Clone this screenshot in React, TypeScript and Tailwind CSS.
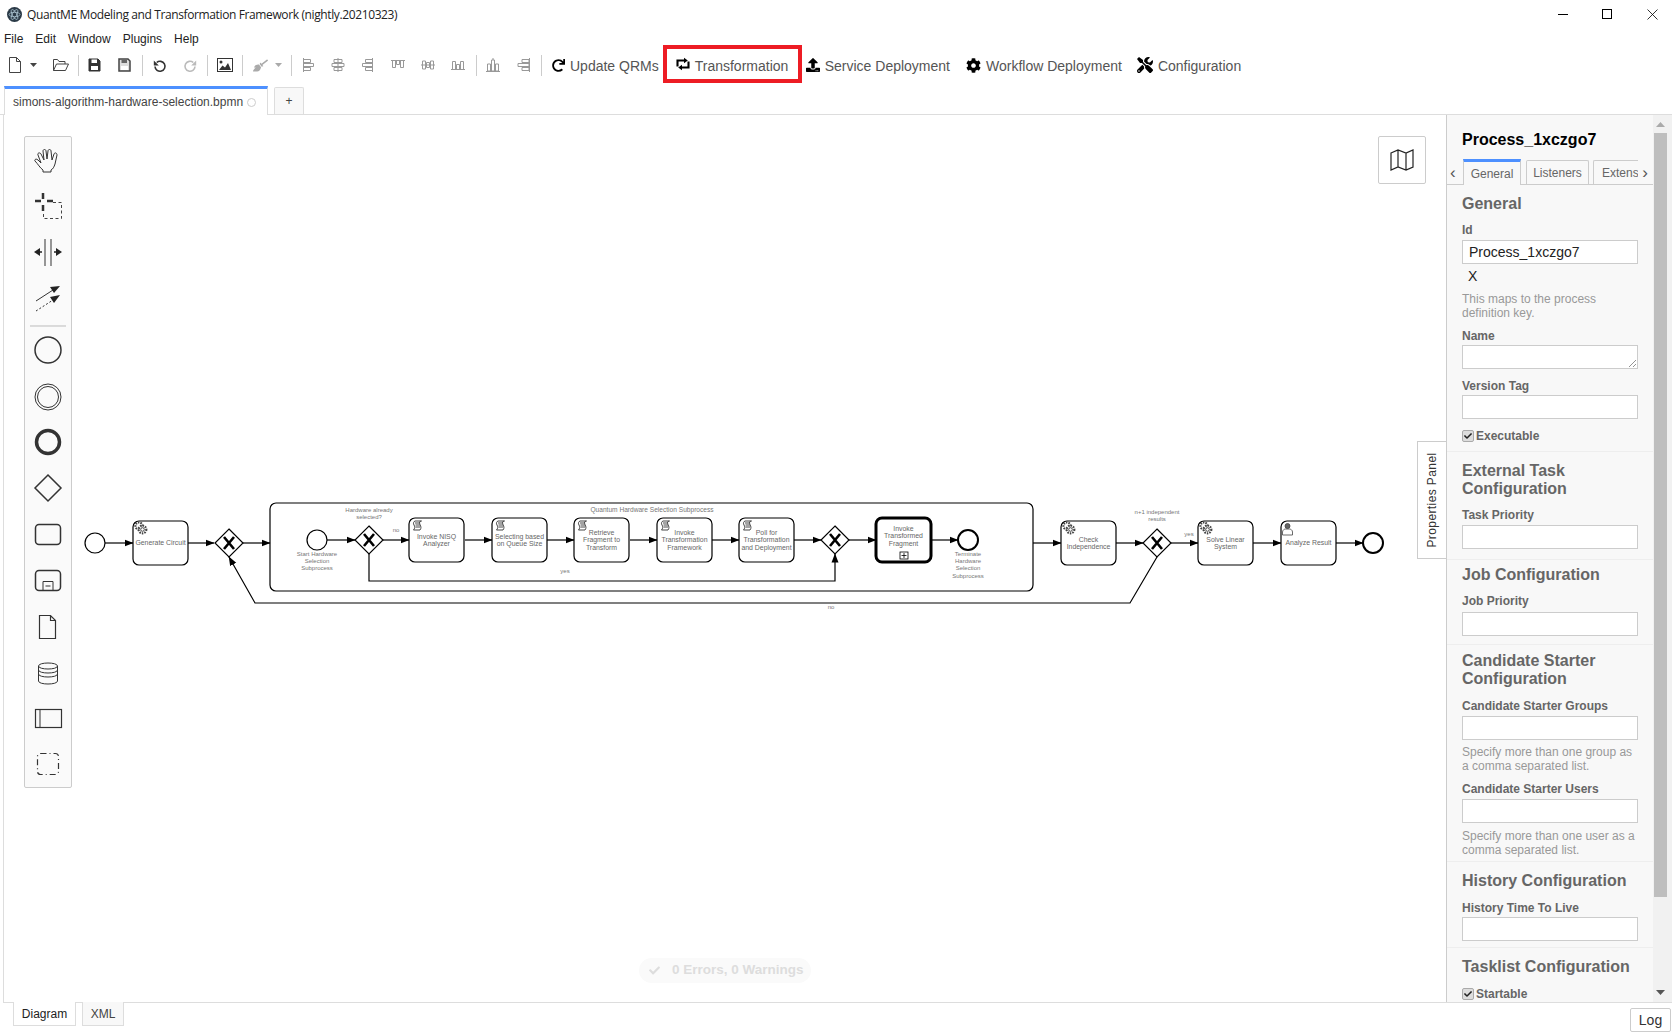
import React from 'react';
import { FaBroom, FaCheck, FaCog, FaRedo, FaTools, FaUpload } from 'react-icons/fa';

const ui = "font-['Liberation_Sans',Arial,sans-serif]";

// toolbar icons, drawn like the diagram-js toolbar set
const stroke = { fill: 'none', stroke: 'currentColor', strokeWidth: 1 };

const NewIcon = () => (
  <svg width="16" height="18" viewBox="0 0 16 18"><path d="M2.500 1.500h7l4 4v11h-11zM9.500 1.500v4h4" {...stroke} /></svg>
);
const OpenIcon = () => (
  <svg width="18" height="14" viewBox="0 0 18 14"><path d="M1.500 12.500v-11h4l1.500 2h6v2.500M1.500 12.500l3-6.500h12l-3 6.500z" {...stroke} /></svg>
);
const SaveIcon = ({ outline }: { outline?: boolean }) => (
  <svg width="13" height="14" viewBox="0 0 13 14">
    <path d="M1 1h9l2 2v10H1z" fill={outline ? '#ddd' : 'currentColor'} stroke="currentColor" strokeWidth={outline ? 1.500 : 1} />
    <rect x="3.500" y="1.500" width="5.500" height="3.500" fill={outline ? '#666' : '#fff'} />
    <rect x="3" y="8" width="7" height="4" fill="#fff" />
  </svg>
);
const UndoIcon = ({ flip }: { flip?: boolean }) => (
  <svg width="14" height="15" viewBox="0 0 14 15" className={flip ? '-scale-x-100' : ''}>
    <path d="M3.700 4.500A5 5 0 1 1 2 8.500" fill="none" stroke="currentColor" strokeWidth="1.600" />
    <path d="M0.800 2.500v5h5z" fill="currentColor" />
  </svg>
);
const ImageIcon = () => (
  <svg width="16" height="14" viewBox="0 0 16 14">
    <rect x="0.500" y="0.500" width="15" height="13" fill="#fff" stroke="currentColor" />
    <path d="M2 12l3.500-4.500 2.500 2 3-4.500 3 7z" fill="currentColor" />
    <circle cx="4" cy="4" r="1.500" fill="currentColor" />
  </svg>
);
const RepeatIcon = () => (
  <svg width="16" height="14" viewBox="0 0 16 14">
    <path d="M2.500 9.500V3.500h7M13.500 4.500v6h-7" fill="none" stroke="currentColor" strokeWidth="2.100" />
    <path d="M9 0.800l3.800 2.700L9 6.200zM7 7.800l-3.800 2.700L7 13.200z" fill="currentColor" />
  </svg>
);

// align / distribute glyphs, all thin outlines
const AlignIcon = ({ d }: { d: string }) => (
  <svg width="16" height="16" viewBox="0 0 16 16"><path d={d} {...stroke} /></svg>
);

const Caret = ({ light }: { light?: boolean }) => (
  <svg width="7" height="4" viewBox="0 0 7 4" className={light ? 'text-[#aaa]' : 'text-[#444]'}><path d="M0 0h7L3.500 4z" fill="currentColor" /></svg>
);
const Sep = () => <div className="h-[21px] w-px bg-[#ccc]" />;

const ToolBtn = ({ icon, label, className = '' }: { icon: React.ReactNode; label: string; className?: string }) => (
  <div className={`flex items-center gap-[5px] text-[14px] text-[#555] ${className}`}>
    <span className="text-black">{icon}</span>
    <span className="pt-[2px]">{label}</span>
  </div>
);

function Toolbar() {
  return (
    <div className="flex h-[32px] items-center pl-[4px]">
      <div className="flex w-[22px] justify-center text-[#444]"><NewIcon /></div>
      <div className="ml-[4px] w-[10px]"><Caret /></div>
      <div className="ml-[12px] text-[#444]"><OpenIcon /></div>
      <div className="ml-[8px]"><Sep /></div>
      <div className="ml-[9px] text-[#333]"><SaveIcon /></div>
      <div className="ml-[17px] text-[#444]"><SaveIcon outline /></div>
      <div className="ml-[11px]"><Sep /></div>
      <div className="ml-[10px] text-[#333]"><UndoIcon /></div>
      <div className="ml-[16px] text-[#bbb]"><UndoIcon flip /></div>
      <div className="ml-[10px]"><Sep /></div>
      <div className="ml-[9px] text-[#333]"><ImageIcon /></div>
      <div className="ml-[9px]"><Sep /></div>
      <div className="ml-[10px] text-[#aaa]"><FaBroom size={15} /></div>
      <div className="ml-[7px]"><Caret light /></div>
      <div className="ml-[9px]"><Sep /></div>
      <div className="ml-[8px] flex items-center gap-[14px] text-[#999]">
        <AlignIcon d="M3.500 1v14M3.500 2.500h7v3h-7M3.500 6.500h10v3h-10M3.500 10.500h7v3h-7" />
        <AlignIcon d="M8 1v14M4 2.500h8v3H4zM2 6.500h12v3H2zM4 10.500h8v3H4z" />
        <AlignIcon d="M12.500 1v14M12.500 2.500h-7v3h7M12.500 6.500h-10v3h10M12.500 10.500h-7v3h7" />
        <AlignIcon d="M1 3.500h14M2.500 3.500v7h3v-7M6.500 3.500v4h3v-4M10.500 3.500v7h3v-7" />
        <AlignIcon d="M1 8h14M2.500 4h3v8h-3zM6.500 5.500h3v5h-3zM10.500 4h3v8h-3z" />
        <AlignIcon d="M1 12.500h14M2.500 12.500v-8h3v8M6.500 12.500v-5h3v5M10.500 12.500v-8h3v8" />
      </div>
      <div className="ml-[10px]"><Sep /></div>
      <div className="ml-[8px] flex items-center gap-[14px] text-[#999]">
        <AlignIcon d="M1 14.500h14M2.500 7h3v7h-3zM6.500 3h3v11h-3zM10.500 7h3v7h-3zM8 3V1" />
        <AlignIcon d="M14.500 1v14M7 2.500h7v3H7zM3 6.500h11v3H3zM7 10.500h7v3H7z" />
      </div>
      <div className="ml-[10px]"><Sep /></div>
      <ToolBtn className="ml-[10px]" icon={<FaRedo size={13} />} label="Update QRMs" />
      <div className="-mt-[2px] ml-[4px] flex h-[38px] w-[139px] items-center gap-[4px] border-4 border-[#ed1c24] pl-[8px] text-[14px] text-[#555]">
        <span className="text-black"><RepeatIcon /></span>
        <span className="pt-[4px]">Transformation</span>
      </div>
      <ToolBtn className="ml-[4px]" icon={<FaUpload size={14} />} label="Service Deployment" />
      <ToolBtn className="ml-[16px]" icon={<FaCog size={15} />} label="Workflow Deployment" />
      <ToolBtn className="ml-[15px]" icon={<FaTools size={16} />} label="Configuration" />
    </div>
  );
}

function Palette() {
  const s = { fill: 'none', stroke: '#333', strokeWidth: 1.500 };
  return (
    <div className="absolute left-[20px] top-[21px] h-[652px] w-[48px] rounded-[2px] border border-[#ccc] bg-[#fafafa]">
      <svg width="46" height="650" viewBox="25 137 46 650">
        {/* hand */}
        <path transform="translate(1 2)" d="M42 168c-3-2-5-6-8-9-1-1 1-3 3-1l3 3-3-8c-1-2 2-3 3-1l3 6-1-9c0-2 3-2 3 0l1 8 1-8c0-2 3-2 3 0l1 9 2-6c1-2 3-1 3 1l-2 9c-1 3-2 5-4 6v2h-8z" fill="none" stroke="#333" strokeWidth="1" />
        {/* lasso */}
        <path d="M43 193v6M43 205v6M35 201h6M47 201h6" stroke="#333" strokeWidth="2.500" fill="none" />
        <path d="M53 202.500h8.500v16H43.500v-7" stroke="#444" fill="none" strokeDasharray="3 2.500" />
        {/* space */}
        <path d="M45 239v27M51 239v27" stroke="#333" strokeWidth="1" />
        <path d="M34 252l6-4v8zM62 252l-6-4v8z" fill="#222" />
        <path d="M37 252h5M54 252h5" stroke="#222" strokeWidth="1.500" />
        {/* connect */}
        <path d="M36 301l17-11" stroke="#333" strokeWidth="1" />
        <path d="M60 286l-10 1 4 6z" fill="#222" />
        <path d="M36 311l17-11" stroke="#333" strokeDasharray="2 2" />
        <path d="M60 295l-10 2 4 6z" fill="#222" />
        <path d="M30 326h36" stroke="#bbb" />
        {/* events */}
        <circle cx="48" cy="350" r="13" {...s} />
        <circle cx="48" cy="397" r="13" {...s} strokeWidth={1} />
        <circle cx="48" cy="397" r="10.500" {...s} strokeWidth={1} />
        <circle cx="48" cy="442" r="11.500" fill="none" stroke="#333" strokeWidth="3.500" />
        <path d="M48 475l13 13-13 13-13-13z" {...s} />
        <rect x="35.500" y="524.500" width="25" height="20" rx="3.500" {...s} />
        <rect x="35.500" y="570.500" width="25" height="20" rx="3.500" {...s} />
        <path d="M43 590.500v-9h10v9M45.500 586h5" stroke="#333" fill="none" />
        <path d="M39.500 615.500h11l5 5v18h-16zM50.500 615.500v5h5" fill="none" stroke="#333" strokeWidth="1.200" />
        <path d="M38.500 666v15c0 4 19 4 19 0v-15c0-4-19-4-19 0c0 4 19 4 19 0M38.500 670c0 4 19 4 19 0M38.500 674c0 4 19 4 19 0" fill="none" stroke="#333" strokeWidth="1" />
        <rect x="35.500" y="709.500" width="26" height="18" fill="none" stroke="#333" strokeWidth="1.200" />
        <path d="M40 709.500v18" stroke="#333" />
        <rect x="37.500" y="753.500" width="21" height="21" rx="3" fill="none" stroke="#333" strokeWidth="1.200" strokeDasharray="6 3 1 3" />
      </svg>
    </div>
  );
}

const Gear = ({ x, y }: { x: number; y: number }) => (
  <g fill="none" stroke="#444" strokeWidth="1">
    <circle cx={x} cy={y} r="3.500" strokeDasharray="1.500 1" strokeWidth="2.200" />
    <circle cx={x + 3.500} cy={y + 3.500} r="3.800" strokeDasharray="1.500 1" strokeWidth="2.200" fill="#fff" />
    <circle cx={x + 3.500} cy={y + 3.500} r="1.800" fill="#fff" />
  </g>
);

const Script = ({ x }: { x: number }) => (
  <path
    transform={`translate(${x} 520)`}
    d="M2 0h6.500c-2 0-2.500 1.500-1.500 3.500s1.500 3.500 0 5.500H0.500c1.500-1.500 1.500-3.500 0.500-5s-0.500-3.500 1-4zM2 2h4.500M2.500 4h4.500M2.500 6h4.500"
    fill="none"
    stroke="#333"
    strokeWidth="0.900"
  />
);

const Task = ({ x, y, lines, w = 55, thick, icon }: { x: number; y: number; lines: string[]; w?: number; thick?: boolean; icon?: React.ReactNode }) => {
  const cx = x + w / 2;
  const top = y + 22 - (lines.length - 1) * 3.700 + 2.200 - (thick ? 4 : 0);
  return (
    <g>
      <rect x={x} y={y} width={w} height={44} rx="6" fill="#fff" stroke="#000" strokeWidth={thick ? 3 : 1.200} />
      {icon}
      <text textAnchor="middle" fontSize="6.900" fill="#666">
        {lines.map((l, i) => <tspan key={l} x={cx} y={top + i * 7.500}>{l}</tspan>)}
      </text>
    </g>
  );
};

const Xor = ({ cx, cy }: { cx: number; cy: number }) => (
  <g>
    <path d={`M${cx} ${cy - 14}l14 14-14 14-14-14z`} fill="#fff" stroke="#000" strokeWidth="1.200" />
    <path d={`M${cx - 5} ${cy - 6}l10 12M${cx + 5} ${cy - 6}l-10 12`} stroke="#000" strokeWidth="2.600" />
  </g>
);

const Flow = ({ d }: { d: string }) => (
  <path d={d} fill="none" stroke="#000" strokeWidth="1.200" markerEnd="url(#arrow)" />
);

const Label = ({ x, y, lines, size = 6 }: { x: number; y: number; lines: string[]; size?: number }) => (
  <text textAnchor="middle" fontSize={size} fill="#777">
    {lines.map((l, i) => <tspan key={l} x={x} y={y + i * 7.200}>{l}</tspan>)}
  </text>
);

function Diagram() {
  return (
    <svg className={`absolute left-0 top-0 ${ui}`} width="1442" height="887" viewBox="4 114 1442 887">
      <defs>
        <marker id="arrow" markerWidth="10" markerHeight="8" refX="8.500" refY="4" orient="auto" markerUnits="userSpaceOnUse">
          <path d="M0 0.500L9 4L0 7.500z" fill="#000" />
        </marker>
      </defs>

      <Flow d="M105 542h28" />
      <Flow d="M188 542h26" />
      <Flow d="M243 542h27" />
      <Flow d="M327 539h28" />
      <Flow d="M383 539h26" />
      <Flow d="M465 539h27" />
      <Flow d="M547 539h27" />
      <Flow d="M630 539h27" />
      <Flow d="M712 539h27" />
      <Flow d="M794 539h27" />
      <Flow d="M849 539h27" />
      <Flow d="M932 539h26" />
      <Flow d="M1033 542h28" />
      <Flow d="M1116 542h27" />
      <Flow d="M1171 542h27" />
      <Flow d="M1253 542h28" />
      <Flow d="M1336 542h27" />
      <Flow d="M369 553v27h466v-27" />
      <Flow d="M1157 556l-27 46H255l-26-46" />

      <circle cx="95" cy="542" r="10" fill="#fff" stroke="#000" strokeWidth="1.200" />
      <Task x={133} y={520} lines={['Generate Circuit']} icon={<Gear x={139} y={525} />} />
      <Xor cx={229} cy={542} />

      <rect x="270" y="502" width="763" height="88" rx="6" fill="none" stroke="#000" strokeWidth="1.200" />
      <Label x={652} y={511} size={6.600} lines={['Quantum Hardware Selection Subprocess']} />

      <circle cx="317" cy="539" r="10" fill="#fff" stroke="#000" strokeWidth="1.200" />
      <Label x={317} y={555} lines={['Start Hardware', 'Selection', 'Subprocess']} />
      <Xor cx={369} cy={539} />
      <Label x={369} y={511} lines={['Hardware already', 'selected?']} />
      <Label x={396} y={531} lines={['no']} />

      <Task x={409} y={517} lines={['Invoke NISQ', 'Analyzer']} icon={<Script x={413} />} />
      <Task x={492} y={517} w={55} lines={['Selecting based', 'on Queue Size']} icon={<Script x={496} />} />
      <Task x={574} y={517} lines={['Retrieve', 'Fragment to', 'Transform']} icon={<Script x={578} />} />
      <Task x={657} y={517} lines={['Invoke', 'Transformation', 'Framework']} icon={<Script x={661} />} />
      <Task x={739} y={517} lines={['Poll for', 'Transformation', 'and Deployment']} icon={<Script x={743} />} />
      <Xor cx={835} cy={539} />
      <Label x={565} y={572} lines={['yes']} />
      <Task
        x={876}
        y={517}
        lines={['Invoke', 'Transformed', 'Fragment']}
        thick
        icon={
          <g>
            <rect x="900" y="551" width="8" height="7" fill="#fff" stroke="#000" strokeWidth="0.800" />
            <path d="M904 552v5M901.500 554.500h5" stroke="#000" strokeWidth="0.800" />
          </g>
        }
      />
      <circle cx="968" cy="539" r="10" fill="#fff" stroke="#000" strokeWidth="2" />
      <Label x={968} y={555} lines={['Terminate', 'Hardware', 'Selection', 'Subprocess']} />
      <Label x={831} y={608} lines={['no']} />

      <Task x={1061} y={520} lines={['Check', 'Independence']} icon={<Gear x={1067} y={525} />} />
      <Xor cx={1157} cy={542} />
      <Label x={1157} y={513} lines={['n+1 independent', 'results']} />
      <Label x={1189} y={535} lines={['yes']} />
      <Task x={1198} y={520} lines={['Solve Linear', 'System']} icon={<Gear x={1204} y={525} />} />
      <Task
        x={1281}
        y={520}
        lines={['Analyze Result']}
        icon={
          <g fill="none" stroke="#444" strokeWidth="0.800">
            <circle cx="1287.500" cy="525" r="2.500" fill="#666" />
            <path d="M1282.500 534v-3c0-2 2-3 3-3h4c1 0 3 1 3 3v3z" />
          </g>
        }
      />
      <circle cx="1373" cy="542" r="10" fill="#fff" stroke="#000" strokeWidth="2" />
    </svg>
  );
}

const Field = ({ label, tall, className, inputClass }: { label: string; tall?: boolean; className: string; inputClass: string }) => (
  <div className={className}>
    <div className="text-[12px] font-bold leading-[14px] text-[#666]">{label}</div>
    <div className={`relative h-[24px] w-[176px] border border-[#ccc] bg-white ${inputClass}`}>
      {tall && (
        <svg className="absolute bottom-0 right-0" width="10" height="10" viewBox="0 0 10 10">
          <path d="M2 9l7-7M6 9l3-3" stroke="#777" strokeWidth="0.800" />
        </svg>
      )}
    </div>
  </div>
);

const Hint = ({ children, className }: { children: React.ReactNode; className: string }) => (
  <div className={`text-[12px] leading-[14px] text-[#999] ${className}`}>{children}</div>
);

const Heading = ({ children }: { children: React.ReactNode }) => (
  <div className="text-[16px] font-bold leading-[18px] text-[#666]">{children}</div>
);

const Check = ({ label, className }: { label: string; className: string }) => (
  <div className={`flex items-center text-[12px] font-bold leading-[14px] text-[#666] ${className}`}>
    <span className="flex h-[12px] w-[12px] items-center justify-center rounded-[2px] border border-[#aaa] bg-[#ddd] text-[#222]"><FaCheck size={8} /></span>
    <span className="ml-[2px]">{label}</span>
  </div>
);

function PropertiesPanel() {
  return (
    <div className="flex w-[226px] shrink-0 overflow-hidden border-l border-[#ccc] bg-[#f8f8f8]">
      <div className="w-[206px] shrink-0 overflow-hidden">
        <div className="pl-[15px] pt-[16px] text-[16px] font-bold leading-[18px] text-black">Process_1xczgo7</div>
        <div className="relative mt-[10px] flex h-[26px] items-end border-b border-[#ccc] pl-[16px] text-[12px]">
          <span className="absolute left-[3px] top-[1px] text-[17px] text-[#555]">‹</span>
          <div className="z-10 -mb-px flex h-[26px] w-[58px] items-center justify-center border-x border-t-[3px] border-x-[#ccc] border-t-[#4d90ff] bg-[#f8f8f8] text-[#666]">General</div>
          <div className="ml-[5px] flex h-[24px] w-[63px] items-center justify-center rounded-t-[2px] border-x border-t border-[#ccc] text-[#666]">Listeners</div>
          <div className="ml-[4px] flex h-[24px] w-[45px] items-center overflow-hidden rounded-tl-[2px] border-l border-t border-[#ccc] pl-[8px] text-[#666]">Extens</div>
          <span className="absolute right-[5px] top-[1px] text-[17px] text-[#555]">›</span>
        </div>

        <div className="px-[15px] pt-[10px]">
          <Heading>General</Heading>
          <div className="mt-[10px] text-[12px] font-bold leading-[14px] text-[#666]">Id</div>
          <div className="mt-[3px] flex h-[24px] w-[176px] items-center border border-[#ccc] bg-white pl-[6px] text-[14px] text-[#222]">Process_1xczgo7</div>
          <div className="mt-[4px] pl-[6px] text-[14px] leading-[16px] text-[#222]">X</div>
          <Hint className="mt-[8px]">This maps to the process<br />definition key.</Hint>
          <Field className="mt-[9px]" inputClass="mt-[2px]" label="Name" tall />
          <Field className="mt-[10px]" inputClass="mt-[2px]" label="Version Tag" />
          <Check className="mt-[10px] pb-[8px]" label="Executable" />
        </div>

        <div className="border-t border-[#eee] px-[15px] pt-[10px]">
          <Heading>External Task<br />Configuration</Heading>
          <Field className="mt-[10px] pb-[10px]" inputClass="mt-[3px]" label="Task Priority" />
        </div>

        <div className="border-t border-[#eee] px-[15px] pt-[6px]">
          <Heading>Job Configuration</Heading>
          <Field className="mt-[10px] pb-[8px]" inputClass="mt-[4px]" label="Job Priority" />
        </div>

        <div className="border-t border-[#eee] px-[15px] pt-[7px]">
          <Heading>Candidate Starter<br />Configuration</Heading>
          <Field className="mt-[11px]" inputClass="mt-[3px]" label="Candidate Starter Groups" />
          <Hint className="mt-[5px]">Specify more than one group as<br />a comma separated list.</Hint>
          <Field className="mt-[9px]" inputClass="mt-[3px]" label="Candidate Starter Users" />
          <Hint className="mt-[6px]">Specify more than one user as a<br />comma separated list.</Hint>
          <div className="h-[4px]" />
        </div>

        <div className="border-t border-[#eee] px-[15px] pt-[10px]">
          <Heading>History Configuration</Heading>
          <Field className="mt-[11px] pb-[6px]" inputClass="mt-[2px]" label="History Time To Live" />
        </div>

        <div className="border-t border-[#eee] px-[15px] pt-[10px]">
          <Heading>Tasklist Configuration</Heading>
          <Check className="mt-[11px]" label="Startable" />
        </div>
      </div>

      {/* scrollbar */}
      <div className="flex w-[19px] shrink-0 flex-col items-center bg-[#f1f1f1] pr-[4px]">
        <svg className="mt-[7px]" width="9" height="5" viewBox="0 0 9 5"><path d="M0 5h9L4.500 0z" fill="#aaa" /></svg>
        <div className="mt-[6px] h-[764px] w-[13px] bg-[#bebebe]" />
        <svg className="mt-[93px]" width="9" height="5" viewBox="0 0 9 5"><path d="M0 0h9L4.500 5z" fill="#555" /></svg>
      </div>
    </div>
  );
}

export default function App() {
  return (
    <div className={`flex h-[1036px] w-[1672px] flex-col overflow-hidden bg-white ${ui}`}>
      {/* title bar */}
      <div className="flex h-[29px] shrink-0 items-center pl-[7px] font-['Open_Sans',sans-serif] text-[12px] text-[#222]">
        <svg width="15" height="15" viewBox="0 0 15 15">
          <circle cx="7.500" cy="7.500" r="7.500" fill="#2b3a47" />
          <g fill="none" stroke="#b9d3e0" strokeWidth="0.700">
            <ellipse cx="7.500" cy="7.500" rx="5.500" ry="2.200" />
            <ellipse cx="7.500" cy="7.500" rx="5.500" ry="2.200" transform="rotate(60 7.500 7.500)" />
            <ellipse cx="7.500" cy="7.500" rx="5.500" ry="2.200" transform="rotate(120 7.500 7.500)" />
          </g>
        </svg>
        <span className="ml-[5px] whitespace-nowrap tracking-[-0.38px]">QuantME Modeling and Transformation Framework (nightly.20210323)</span>
        <div className="ml-auto flex items-center">
          <svg width="11" height="11" viewBox="0 0 11 11"><path d="M0 5.500h10" stroke="#000" /></svg>
          <svg className="ml-[33px]" width="11" height="11" viewBox="0 0 11 11"><rect x="0.500" y="0.500" width="9" height="9" fill="none" stroke="#000" /></svg>
          <svg className="ml-[34px] mr-[14px]" width="11" height="11" viewBox="0 0 11 11"><path d="M0.500 0.500l10 10M10.500 0.500l-10 10" stroke="#000" strokeWidth="0.800" /></svg>
        </div>
      </div>

      {/* menu bar */}
      <div className="flex h-[20px] shrink-0 items-center gap-[12px] pl-[4px] text-[12px] text-[#222]">
        <span>File</span>
        <span>Edit</span>
        <span>Window</span>
        <span>Plugins</span>
        <span>Help</span>
      </div>

      <Toolbar />

      {/* file tabs */}
      <div className="mt-[5px] flex h-[29px] shrink-0 items-end border-b border-[#ddd] pl-[4px] text-[12px] text-[#444]">
        <div className="-mb-px flex h-[29px] w-[264px] items-center border-x border-t-[3px] border-x-[#ddd] border-t-[#4d90ff] bg-white pl-[8px]">
          <span>simons-algorithm-hardware-selection.bpmn</span>
          <span className="ml-[4px] h-[9px] w-[9px] rounded-full border border-[#ccc]" />
        </div>
        <div className="ml-[6px] flex h-[27px] w-[30px] items-center justify-center rounded-t-[2px] border-x border-t border-[#ddd] bg-[#f8f8f8]">+</div>
      </div>

      {/* canvas and properties */}
      <div className="ml-[3px] flex min-h-0 flex-1 border-b border-l border-[#ddd]">
        <div className="relative min-w-0 flex-1 bg-white">
          <Diagram />
          <Palette />
          <div className="absolute left-[1374px] top-[21px] flex h-[48px] w-[48px] items-center justify-center rounded-[2px] border border-[#ccc] bg-white">
            <svg width="24" height="22" viewBox="0 0 24 22">
              <path d="M1 4l7-3 8 3 7-3v17l-7 3-8-3-7 3zM8 1v17M16 4v17" fill="none" stroke="#222" strokeWidth="1.200" />
            </svg>
          </div>
          <div className="absolute left-[1413px] top-[326px] flex h-[118px] w-[29px] items-center justify-center border-y border-l border-[#ccc] bg-white text-[12px] tracking-[0.4px] text-[#333]">
            <span className="-rotate-90 whitespace-nowrap">Properties Panel</span>
          </div>
          <div className="absolute left-[635px] top-[843px] flex h-[25px] w-[172px] items-center rounded-full bg-[#fafafa] pl-[10px] text-[13.500px] font-bold text-[#ddd]">
            <FaCheck size={11} />
            <span className="ml-[12px] whitespace-nowrap">0 Errors, 0 Warnings</span>
          </div>
        </div>
        <PropertiesPanel />
      </div>

      {/* bottom tabs */}
      <div className="flex h-[33px] shrink-0 items-start pl-[13px] text-[12px] text-[#444]">
        <div className="-mt-px flex h-[24px] w-[63px] items-center justify-center border-x border-b border-[#ddd] bg-white text-[#222]">Diagram</div>
        <div className="-mt-px ml-[6px] flex h-[24px] w-[42px] items-center justify-center border-x border-b border-[#ddd] bg-[#f8f8f8]">XML</div>
        <div className="ml-auto mr-[1px] mt-[5px] flex h-[24px] w-[41px] items-center justify-center rounded-[2px] border border-[#ccc] bg-white text-[14px] text-[#333]">Log</div>
      </div>
    </div>
  );
}
